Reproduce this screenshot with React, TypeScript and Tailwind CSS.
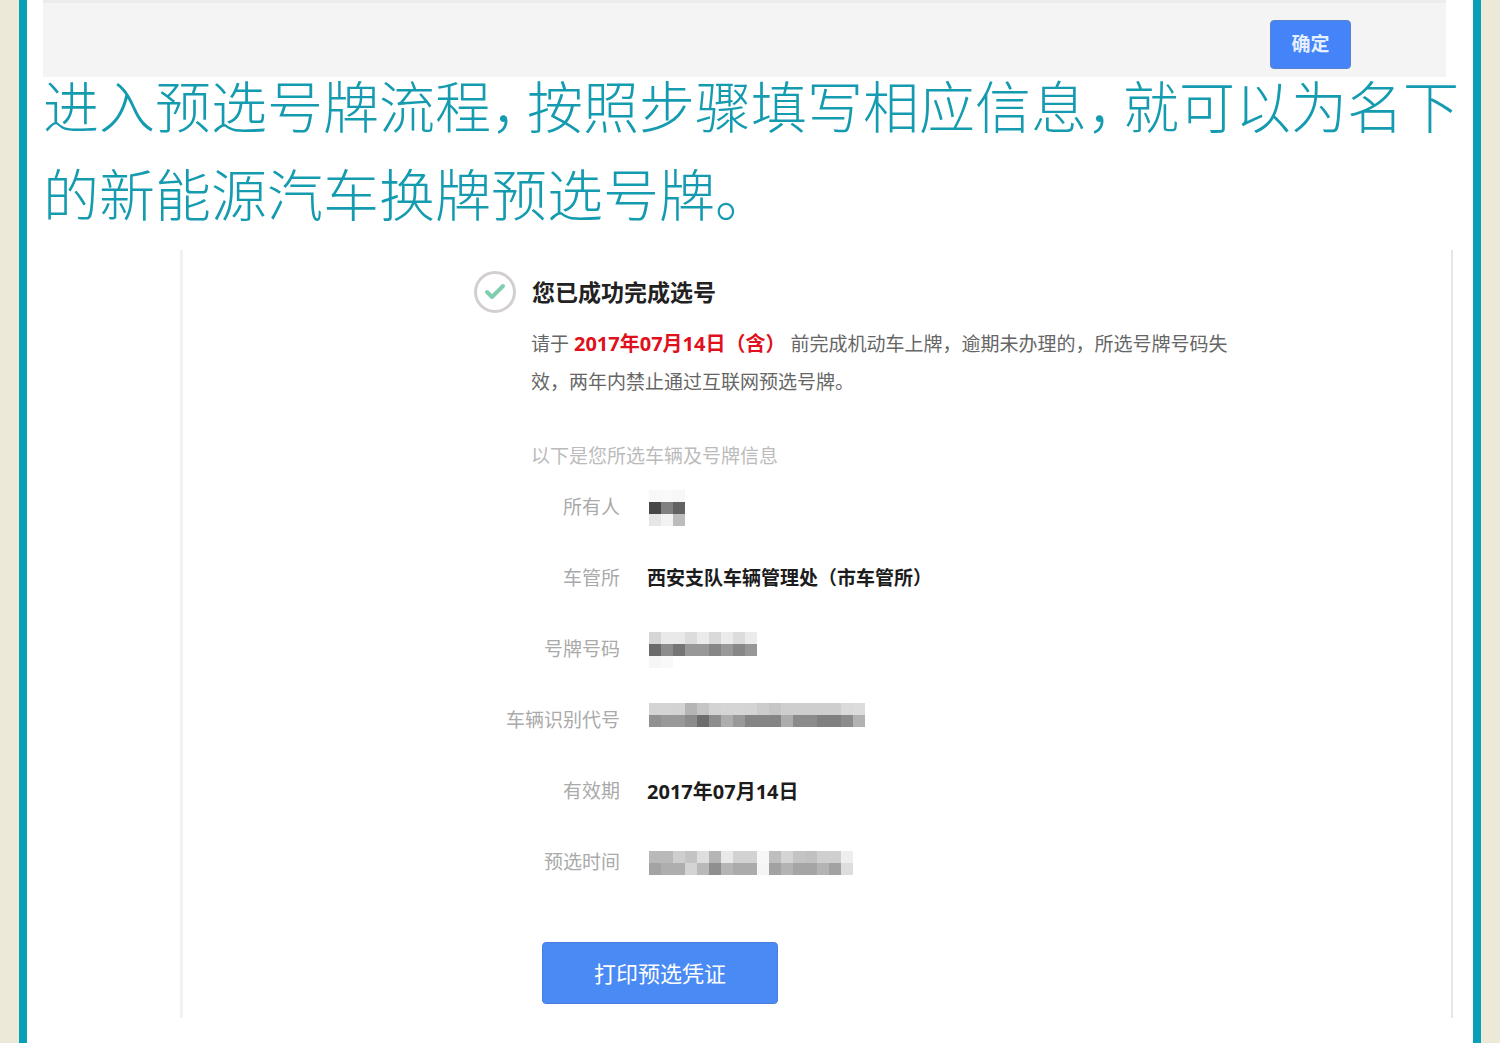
import { Check } from 'lucide-react';

type Field = {
  label: string;
  value?: string;
  mask?: string[][];
  date?: boolean;
};

// Each string is one mosaic tile, rows run top to bottom
const fields: Field[] = [
  {
    label: '所有人',
    mask: [
      ['#f8f8f8', '#f9f9f9', '#f7f7f7'],
      ['#474747', '#808080', '#626262'],
      ['#e6e6e6', '#f3f3f3', '#bcbcbc'],
    ],
  },
  { label: '车管所', value: '西安支队车辆管理处（市车管所）' },
  {
    label: '号牌号码',
    mask: [
      ['#d6d6d6', '#e9e9e9', '#e9e9e9', '#dcdcdc', '#ebebeb', '#d9d9d9', '#ebebeb', '#dcdcdc', '#ebebeb'],
      ['#6b6b6b', '#8c8c8c', '#757575', '#989898', '#989898', '#868686', '#999999', '#878787', '#979797'],
      ['#f6f6f6', '#f9f9f9', '#ffffff', '#ffffff', '#ffffff', '#ffffff', '#ffffff', '#ffffff', '#ffffff'],
    ],
  },
  {
    label: '车辆识别代号',
    mask: [
      ['#d4d4d4', '#d4d4d4', '#d3d3d3', '#b5b5b5', '#c5c5c5', '#d3d3d3', '#d5d5d5', '#d5d5d5', '#d4d4d4', '#cccccc', '#c6c6c6', '#cecece', '#cecece', '#cecece', '#cecece', '#cecece', '#dadada', '#dcdcdc'],
      ['#919191', '#999999', '#999999', '#8c8c8c', '#6d6d6d', '#8d8d8d', '#adadad', '#999999', '#858585', '#858585', '#858585', '#adadad', '#8b8b8b', '#8b8b8b', '#808080', '#808080', '#8c8c8c', '#b2b2b2'],
      ['#ffffff', '#ffffff', '#ffffff', '#ffffff', '#ffffff', '#ffffff', '#ffffff', '#ffffff', '#ffffff', '#ffffff', '#ffffff', '#ffffff', '#ffffff', '#ffffff', '#ffffff', '#ffffff', '#ffffff', '#ffffff'],
    ],
  },
  { label: '有效期', value: '2017年07月14日', date: true },
  {
    label: '预选时间',
    mask: [
      ['#b9b9b9', '#b9b9b9', '#cecece', '#c4c4c4', '#dedede', '#b5b5b5', '#e9e9e9', '#d2d2d2', '#d2d2d2', '#f7f7f7', '#bebebe', '#d4d4d4', '#c4c4c4', '#c1c1c1', '#cfcfcf', '#cfcfcf', '#eeeeee'],
      ['#a3a3a3', '#aeaeae', '#aeaeae', '#d4d4d4', '#b9b9b9', '#8f8f8f', '#b5b5b5', '#ababab', '#ababab', '#f5f5f5', '#a2a2a2', '#b3b3b3', '#a5a5a5', '#a5a5a5', '#b4b4b4', '#a2a2a2', '#dddddd'],
    ],
  },
];

function Mosaic({ rows }: { rows: string[][] }) {
  return (
    <div className="ml-0.5">
      {rows.map((row, y) => (
        <div key={y} className="flex">
          {row.map((color, x) => (
            <span key={x} className="size-3" style={{ backgroundColor: color }} />
          ))}
        </div>
      ))}
    </div>
  );
}

function ResultPanel() {
  return (
    <section className="mt-3 ml-[137px] mr-1 border-l-3 border-l-[#f1f1f1] border-r-2 border-r-[#e6e6e6] pl-[291px] pt-[21px] pb-3.5">
      <div className="flex items-center gap-4">
        <div className="flex size-[42px] items-center justify-center rounded-full border-3 border-[#d3cfcf]">
          <Check className="size-6 text-[#7fceae]" strokeWidth={4} />
        </div>
        <h2 className="text-[23px] font-bold text-[#222]">您已成功完成选号</h2>
      </div>

      <div className="pl-[57px]">
        <p className="mt-3 text-[19px] leading-[38px] text-[#666]">
          请于 <strong className="text-[20px] font-bold text-[#e0101c]">2017年07月14日（含）</strong>{' '}
          前完成机动车上牌，逾期未办理的，所选号牌号码失
          <br />
          效，两年内禁止通过互联网预选号牌。
        </p>
        <p className="mt-[41px] text-[19px] leading-7 text-[#bbb]">以下是您所选车辆及号牌信息</p>
      </div>

      <dl className="mt-0.5">
        {fields.map((field) => (
          <div key={field.label} className="flex h-[71px] items-center gap-[27px]">
            <dt className="w-[146px] shrink-0 text-right text-[19px] text-[#aaa]">{field.label}</dt>
            <dd className="font-bold text-[#1c1c1c]">
              {field.mask ? (
                <Mosaic rows={field.mask} />
              ) : (
                <span className={field.date ? 'text-[20px]' : 'text-[19px]'}>{field.value}</span>
              )}
            </dd>
          </div>
        ))}
      </dl>

      <button
        type="button"
        className="mt-11 ml-[68px] block h-[62px] w-[236px] rounded-sm border border-[#4a7ddb] bg-[#4a8af4] text-[22px] text-white"
      >
        打印预选凭证
      </button>
    </section>
  );
}

export default function App() {
  return (
    <div className="min-h-screen bg-[#ece9d8] px-[19px] font-['Noto_Sans','Noto_Sans_CJK_SC',sans-serif]" lang="zh-CN">
      <main className="min-h-screen border-x-8 border-[#089fb7] bg-white px-4">
        <div className="mr-[11px] flex h-[77px] items-center justify-end border-t-3 border-[#ececec] bg-[#f4f4f4] pt-2 pr-[95px]">
          <button
            type="button"
            className="h-[49px] w-[81px] rounded-sm border border-[#5b82cf] bg-[#4484f8] text-[19px] font-bold text-[#e6efff]"
          >
            确定
          </button>
        </div>

        <h1 className="-mt-[15px] -mr-3 text-[56px] leading-[88px] font-light text-[#149bb0] [font-feature-settings:'halt']">
          进入预选号牌流程<span className="mr-2">，</span>按照步骤填写相应信息<span className="mr-2">，</span>就可以为名下
          <br />
          的新能源汽车换牌预选号牌。
        </h1>

        <ResultPanel />
      </main>
    </div>
  );
}
